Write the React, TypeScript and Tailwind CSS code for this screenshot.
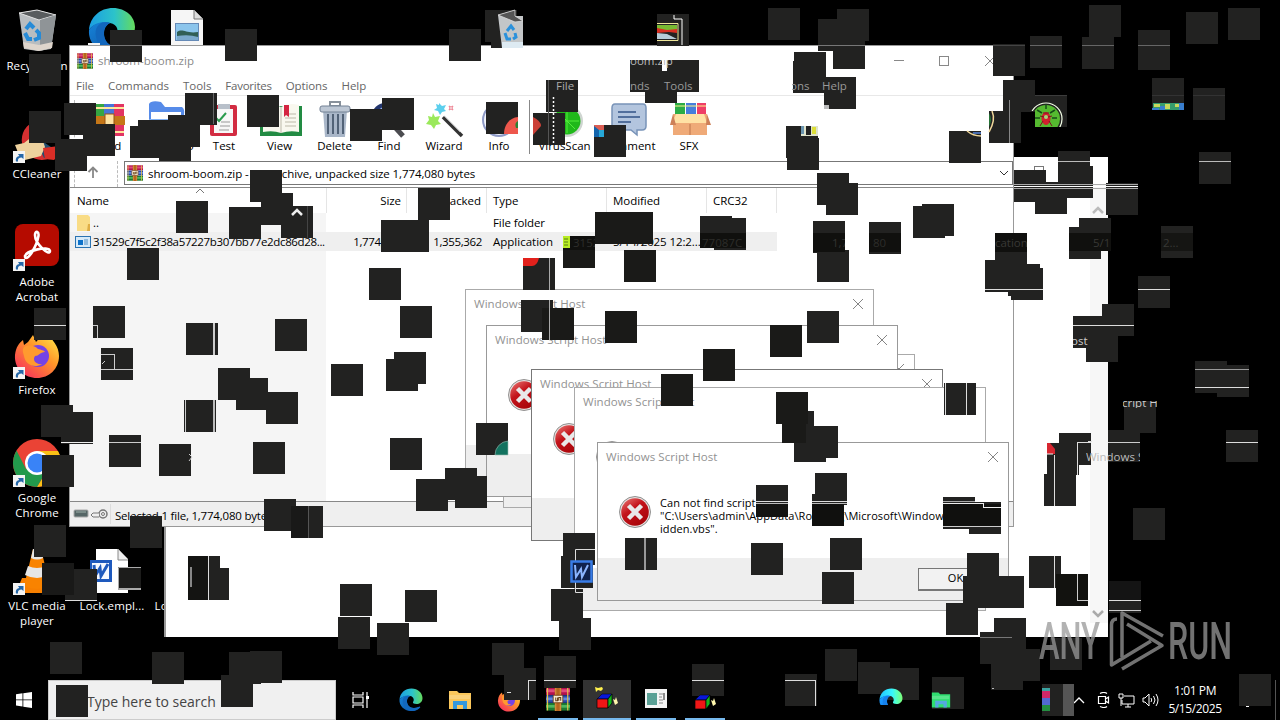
import React from 'react';

type Box = [number, number, number, number, string];

// --- TACHES CARRÉES (32x32) DISPERSÉES SUR L'ÉCRAN ---
const BLOCKS: [number, number][] = [
  [110, 30], [225, 29], [29, 54], [64, 103], [29, 111], [83, 124], [55, 139], [185, 93], [247, 95],
  [130, 126], [138, 120], [168, 115], [159, 129], [250, 170], [449, 29], [485, 10], [491, 16],
  [350, 109], [382, 98], [486, 102], [546, 80], [533, 113], [594, 125], [630, 60], [657, 14],
  [768, 8], [837, 9], [818, 19], [833, 37], [794, 52], [793, 61], [824, 77], [667, 60], [645, 71],
  [786, 126], [787, 138], [949, 131], [817, 173], [826, 183], [993, 44], [1030, 36], [1089, 5],
  [1082, 37], [1138, 30], [1138, 38], [1186, 12], [1228, 8], [1003, 80], [1035, 95], [989, 111],
  [1152, 78], [1193, 88], [1199, 152], [1058, 151], [1014, 170], [1061, 166], [1035, 182],
  [1106, 183], [1079, 218], [1069, 227], [1161, 226], [1138, 276], [995, 238],
  [176, 201], [229, 207], [261, 193], [281, 206], [127, 248], [93, 306], [101, 348], [186, 323],
  [275, 319], [34, 308], [218, 368], [236, 378], [266, 392], [184, 400], [41, 405], [418, 188],
  [381, 220], [397, 220], [369, 268], [400, 306], [394, 352], [386, 359], [331, 364], [523, 258],
  [521, 300], [542, 308], [563, 236], [595, 212], [621, 212], [624, 250], [605, 311], [700, 216],
  [714, 218], [813, 221], [869, 222], [922, 204], [913, 206], [817, 250], [807, 311], [770, 325],
  [703, 349], [661, 374], [776, 392], [944, 383], [985, 260], [1008, 264], [1011, 268], [1102, 304],
  [1073, 316], [1086, 330], [1195, 361], [1217, 365], [1124, 401], [1108, 430], [1226, 430],
  [61, 412], [109, 435], [159, 444], [253, 442], [42, 455], [264, 499], [291, 506], [130, 516],
  [34, 525], [42, 563], [65, 569], [188, 556], [197, 568], [50, 642], [152, 652], [229, 652],
  [250, 651], [221, 675], [56, 685], [390, 438], [476, 423], [445, 468], [416, 479], [455, 476],
  [563, 533], [561, 556], [551, 589], [559, 618], [340, 584], [338, 617], [377, 623], [405, 590],
  [492, 643], [504, 668], [544, 656], [625, 538], [782, 411], [794, 430], [806, 426], [815, 473],
  [756, 485], [812, 494], [943, 497], [969, 502], [751, 543], [830, 538], [822, 572], [967, 553],
  [963, 576], [992, 576], [946, 603], [1029, 556], [1056, 574], [1059, 433], [1047, 443],
  [1044, 474], [1133, 508], [1109, 581], [994, 618], [980, 632], [1008, 649], [991, 658],
  [1050, 638], [825, 649], [858, 662], [887, 668], [932, 677], [692, 664], [785, 674], [1042, 684],
  [1239, 674],
];

// Zones un peu plus sombres à l'intérieur des taches
const SHADES: Box[] = [
  [563, 236, 32, 32, '#1a1a18'], [595, 212, 58, 32, '#1a1a18'], [624, 250, 32, 32, '#1a1a18'],
  [542, 308, 32, 32, '#1a1a18'], [605, 311, 32, 32, '#1a1a18'], [770, 325, 32, 32, '#1a1a18'],
  [703, 349, 32, 32, '#1a1a18'], [661, 374, 32, 32, '#1a1a18'], [776, 392, 32, 32, '#1a1a18'],
  [782, 424, 24, 19, '#1a1a18'],
  [813, 233, 32, 19, '#10100e'], [869, 233, 32, 19, '#10100e'], [700, 233, 46, 15, '#10100e'],
  [563, 236, 32, 14, '#10100e'], [995, 233, 32, 19, '#10100e'], [1069, 233, 42, 18, '#10100e'],
  [1161, 233, 32, 18, '#151513'], [943, 504, 58, 22, '#10100e'], [812, 504, 32, 22, '#10100e'],
  [756, 504, 32, 13, '#141412'], [188, 556, 20, 44, '#141412'], [1056, 574, 32, 32, '#12120f'],
  [42, 563, 32, 32, '#191918'], [291, 506, 17, 32, '#191918'], [1109, 581, 32, 20, '#141414'],
];

// Traits de fenêtres qui restent visibles sur les taches
const LINES: Box[] = [
  [110, 45, 32, 1, '#777777'], [818, 45, 47, 1, '#777777'], [993, 45, 32, 1, '#444444'],
  [1030, 45, 32, 1, '#666666'], [1082, 45, 32, 1, '#666666'], [1138, 45, 32, 1, '#666666'],
  [213, 93, 1, 31, '#666666'], [548, 80, 1, 65, '#555555'], [307, 206, 1, 32, '#444444'],
  [93, 325, 5, 1, '#cccccc'], [97, 325, 1, 13, '#cccccc'], [34, 325, 32, 1, '#dddddd'],
  [101, 354, 14, 1, '#cccccc'], [114, 354, 1, 16, '#cccccc'], [101, 369, 32, 1, '#cccccc'],
  [213, 323, 2, 32, '#cccccc'], [185, 400, 1, 32, '#cccccc'], [213, 400, 2, 32, '#bbbbbb'],
  [61, 442, 32, 1, '#eeeeee'], [109, 442, 32, 1, '#cccccc'], [308, 506, 1, 32, '#555555'],
  [65, 600, 32, 1, '#dddddd'], [208, 556, 1, 44, '#dddddd'], [190, 567, 2, 20, '#888888'],
  [549, 258, 1, 32, '#aaaaaa'], [549, 300, 1, 40, '#aaaaaa'], [644, 538, 2, 32, '#999999'],
  [756, 501, 32, 1, '#dddddd'], [756, 503, 32, 1, '#bbbbbb'], [812, 501, 35, 1, '#dddddd'],
  [812, 503, 35, 1, '#bbbbbb'], [943, 501, 32, 1, '#aaaaaa'], [943, 503, 40, 1, '#eeeeee'],
  [983, 503, 1, 4, '#eeeeee'], [983, 507, 18, 1, '#eeeeee'], [943, 526, 58, 1, '#cccccc'],
  [945, 383, 1, 32, '#dddddd'], [966, 383, 1, 32, '#dddddd'], [985, 289, 58, 1, '#dddddd'],
  [1138, 289, 32, 1, '#dddddd'], [1073, 325, 61, 1, '#dddddd'], [1195, 369, 54, 1, '#999999'],
  [1195, 387, 54, 1, '#dddddd'], [1108, 442, 32, 1, '#cccccc'], [1226, 442, 32, 1, '#dddddd'],
  [1109, 600, 32, 1, '#dddddd'], [1109, 610, 32, 1, '#cccccc'], [1054, 455, 1, 51, '#dddddd'],
  [1054, 556, 1, 32, '#dddddd'], [1077, 442, 1, 33, '#dddddd'], [1077, 442, 14, 1, '#dddddd'],
  [1077, 574, 1, 26, '#cccccc'], [1077, 600, 11, 1, '#cccccc'], [1058, 161, 32, 1, '#bbbbbb'],
  [1199, 161, 32, 1, '#bbbbbb'], [1014, 184, 124, 1, '#aaaaaa'], [1014, 186, 124, 1, '#ffffff'],
  [1014, 188, 124, 1, '#aaaaaa'], [692, 680, 32, 1, '#dddddd'], [785, 680, 31, 1, '#dddddd'],
  [815, 680, 1, 26, '#dddddd'], [528, 680, 8, 1, '#dddddd'], [528, 680, 1, 20, '#dddddd'],
  [544, 680, 32, 1, '#dddddd'], [1009, 100, 1, 43, '#888888'], [1035, 95, 32, 1, '#3c3c3c'],
  [1152, 95, 32, 1, '#333333'], [1193, 95, 32, 1, '#333333'], [980, 637, 32, 1, '#777777'],
  [1063, 684, 11, 32, '#555555'], [662, 60, 5, 11, '#ffffff'], [1246, 706, 3, 1, '#ffffff'],
  [992, 688, 2, 1, '#bbbbbb'], [507, 692, 4, 1, '#dddddd'], [824, 105, 5, 4, '#bbbbbb'],
  [1088, 441, 4, 1, '#dddddd'],
];

// [x, y, largeur, hauteur, décalage x, décalage y, texte, classe]
const GHOST_TEXTS: [number, number, number, number, number, number, string, string][] = [
  [546, 78, 32, 16, 10, 0, 'File', 'text-[#aaa]'],
  [630, 60, 46, 20, 0, -7, 'oom.zip', 'text-[#bbb]'],
  [630, 78, 22, 16, 0, 0, 'nds', 'text-[#999]'],
  [662, 78, 37, 16, 2, 0, 'Tools', 'text-[#999]'],
  [792, 78, 20, 16, -2, 0, 'ons', 'text-[#999]'],
  [820, 78, 34, 16, 2, 0, 'Help', 'text-[#999]'],
  [571, 235, 24, 16, 2, 0, '3152', 'text-[#2d2d2a]'],
  [700, 235, 46, 16, 2, 0, '77087C', 'text-[#2d2d2a]'],
  [830, 235, 15, 16, 2, 0, '1,7', 'text-[#333330]'],
  [869, 235, 32, 16, 4, 0, '80', 'text-[#2d2d2a]'],
  [995, 235, 32, 16, -3, 0, 'ication', 'text-[#383835]'],
  [1085, 235, 26, 16, 8, 0, '5/1', 'text-[#383835]'],
  [1161, 235, 32, 16, 2, 0, '2...', 'text-[#383835]'],
  [1073, 333, 16, 16, -2, 0, 'ost', 'text-[#ccc]'],
  [1123, 401, 34, 7, -1, -6, 'cript Host', 'text-[#ccc]'],
  [1086, 449, 54, 16, 0, 0, 'Windows Script', 'text-[#bbb]'],
];

const RarIcon = ({ className }: { className: string }) => (
  <svg viewBox="0 0 16 16" className={`shrink-0 ${className}`}>
    <rect width="16" height="5" y="0.3" fill="#b3124f" />
    <rect width="16" height="2" y="1.5" fill="#e04a7d" />
    <rect width="16" height="5" y="5.5" fill="#274aa8" />
    <rect width="16" height="1.8" y="7" fill="#5f86df" />
    <rect width="16" height="5" y="10.7" fill="#1c7a32" />
    <rect width="16" height="1.8" y="12" fill="#4cb85e" />
    <path d="M1 .3v15.4M14.5 .3v15.4" stroke="#e3c04b" strokeWidth=".8" />
    <rect x="5.8" width="4.4" height="16" fill="#b5651f" />
    <path d="M6.500 0v16M9.500 0v16" stroke="#e8a94c" strokeWidth=".5" />
    <rect x="4.8" y="5.500" width="6.400" height="5" rx=".8" fill="#f4ead2" stroke="#774014" strokeWidth=".6" />
    <path d="M6.500 7v2.200h1.200V7M8.500 9.200V7h1.300v2.200" fill="none" stroke="#674016" strokeWidth=".7" />
  </svg>
);

const EdgeIcon = ({ className }: { className: string }) => (
  <svg viewBox="0 0 48 48" className={className}>
    <defs>
      <linearGradient id="edgeTop" x1="0" x2="1"><stop stopColor="#1b9de2" /><stop offset=".55" stopColor="#2cc3ca" /><stop offset="1" stopColor="#65db5d" /></linearGradient>
      <linearGradient id="edgeLow" x1="0" x2="1" y2="1"><stop stopColor="#1683d8" /><stop offset="1" stopColor="#0c4fa0" /></linearGradient>
    </defs>
    <path d="M1 23C2 10 12 1 25 1c13 0 22 9 22 19 0 8-6 12-12 12-5 0-8-2-7-4 3-3 2-11-6-12C12 15 4 18 1 23Z" fill="url(#edgeTop)" />
    <path d="M1 23c5-8 16-9 21-7-6 3-7 10-5 16 3 8 13 10 22 6 3-1 4 0 3 1-5 6-12 8-19 7C10 45 0 36 1 23Z" fill="url(#edgeLow)" />
    <path d="M17 32c-3-8 0-14 5-16-10-3-16 4-14 14 2 9 9 15 17 16 6 0 13-3 17-7 1-1 0-2-3-1-9 4-19 2-22-6Z" fill="#1267bd" />
  </svg>
);

const FirefoxIcon = ({ className }: { className: string }) => (
  <svg viewBox="0 0 48 48" className={className}>
    <defs>
      <linearGradient id="fox" x1="1" x2=".15" y2="1"><stop stopColor="#fff04b" /><stop offset=".45" stopColor="#ff9629" /><stop offset="1" stopColor="#f72b5f" /></linearGradient>
    </defs>
    <path d="M2 24C3 16 6 12 10 9l1 5 4-3 5-7 3 7c3-4 7-5 8-8 9 4 15 13 15 22 0 13-10 22-22 22S1 38 2 24Z" fill="url(#fox)" />
    <circle cx="25" cy="25" r="11" fill="#7543e5" />
    <path d="M11 16c6-3 11-1 14 2 3 1 6 1 7 3-5 0-6 4-10 4-3 4 1 9 7 8-8 5-17 0-18-8-1-4-2-6 0-9Z" fill="#ff9a2f" />
  </svg>
);

const ShortcutArrow = () => (
  <svg viewBox="0 0 12 12" className="absolute bottom-0 left-0 size-3">
    <rect width="12" height="12" fill="#f4f4f4" />
    <path d="M3 10.500C2.300 7 4 5.300 6.300 5L5 3h5.500v5L8.600 6.500C6 6.500 4.500 8 5 10.500Z" fill="#2467a8" />
  </svg>
);

const BinIcon = () => (
  <svg viewBox="0 0 48 48" className="size-12">
    <path d="M6 6 24 3l19 5-5 34-13 2-14-2Z" fill="#b9bdc0" />
    <path d="M6 6 24 3l19 5-17 5Z" fill="#595c5e" stroke="#e3e3e3" />
    <path d="M27 13 43 8l-5 33-11 3Z" fill="#8f9497" />
    <path d="m10 35 16 3 14-3-1 6-13 3-15-3Z" fill="#ded5cc" />
    <path d="m13 22 4-5 4 4M12 26l3 6h4M21 33l5-2v-5l-3-3" fill="none" stroke="#278bd7" strokeWidth="4" />
  </svg>
);

const PictureFile = () => (
  <svg viewBox="0 0 48 48" className="size-12">
    <path d="M8 3h23l9 9v34H8Z" fill="#f6f6f6" />
    <path d="M31 3v9h9" fill="#ddd" stroke="#777" />
    <rect x="12.500" y="16.500" width="23" height="17" fill="#8cc5ec" stroke="#658ab7" />
    <path d="M14 25c6-4 9 2 21 0v8H14Z" fill="#315f55" />
    <path d="M14 29q12-2 21 1v3H14Z" fill="#7ba9cc" />
  </svg>
);

const WordFile = () => (
  <svg viewBox="0 0 48 48" className="size-12">
    <path d="M8 2h22l10 10v34H8Z" fill="#fff" />
    <path d="M30 2v11h10" fill="#eee" stroke="#888" />
    <rect x="2" y="13" width="22" height="22" fill="#1e59bd" />
    <rect x="4" y="16" width="17" height="16" fill="#f5f8ff" />
    <path d="m6 18 1 11 5-8 1 8 7-12" fill="none" stroke="#1e59bd" strokeWidth="3" />
  </svg>
);

const CCleanerIcon = () => (
  <svg viewBox="0 0 48 48" className="size-12">
    <path d="M42 10A20 20 0 1 0 43 39L34 32A10 10 0 1 1 34 17Z" fill="#d63031" />
    <path d="m20 20 18 12 5 8-12 3Z" fill="#244f71" />
    <path d="m2 30 9-2 9-7 10 5 2 6-4 9-16 4-6-5Z" fill="#eed29e" />
    <path d="m30 33 16-2q2 9-5 14l-9-1Z" fill="#d92e27" />
  </svg>
);

const AcrobatIcon = () => (
  <svg viewBox="0 0 48 48" className="size-12">
    <rect x="2" y="1" width="44" height="42" rx="8" fill="#b50b00" />
    <path d="M12 33c1-5 24-11 25-5 0 6-15-7-15-16 0-5 5-4 3 3-1 6-8 20-12 20-1 0-1-1-1-2Z" fill="none" stroke="#fff" strokeWidth="2.600" />
  </svg>
);

const ChromeIcon = () => (
  <svg viewBox="0 0 48 48" className="size-12">
    <circle cx="24" cy="24" r="24" fill="#ea4335" />
    <path d="M24 12h21A24 24 0 0 1 24 48l11-18Z" fill="#fbc116" />
    <path d="M3.500 11.500A24 24 0 0 0 24 48l10.500-18L13 30Z" fill="#229a4c" />
    <circle cx="24" cy="24" r="12" fill="#fff" /><circle cx="24" cy="24" r="9.500" fill="#3983f7" />
  </svg>
);

const VlcIcon = () => (
  <svg viewBox="0 0 48 48" className="size-12">
    <path d="m9 31-6 15h42l-6-15Z" fill="#f77f00" />
    <path d="m20 2-9 37q13 6 26 0L28 2Z" fill="#f98300" />
    <path d="m20 2-2 9q6 3 12 0l-2-9ZM15 19l-3 9q12 6 24 0l-3-9q-9 4-18 0Z" fill="#e6e6e6" />
  </svg>
);

const ErrorIcon = () => (
  <svg viewBox="0 0 32 32" className="size-8 shrink-0">
    <defs>
      <linearGradient id="err" x1="0" y1="0" x2=".7" y2="1"><stop stopColor="#ed7d79" /><stop offset=".45" stopColor="#c3141b" /><stop offset="1" stopColor="#a80409" /></linearGradient>
    </defs>
    <circle cx="16" cy="16" r="15.500" fill="#e7e1df" stroke="#777" strokeWidth=".8" />
    <circle cx="16" cy="16" r="13.800" fill="url(#err)" />
    <path d="m9.500 9.500 13 13M22.500 9.500l-13 13" stroke="#e9e9e9" strokeWidth="4.500" />
  </svg>
);

const Cross = ({ className }: { className: string }) => (
  <svg viewBox="0 0 10 10" className={className}><path d="m0 0 10 10M10 0 0 10" stroke="#858585" strokeWidth="1" /></svg>
);

// Icônes de la barre d'outils
const toolIcon: Record<string, React.ReactNode> = {
  Add: <g><path d="M1 2h10v32H1z" fill="#36a643" /><path d="M11 2h10v32H11z" fill="#4775d8" /><path d="M21 2h10v32H21z" fill="#e23463" /><path d="M1 6h30M1 30h30" stroke="#ffe69c" strokeWidth="2" /><path d="M0 14h32v9H0z" fill="#c57718" /><rect x="12" y="12" width="9" height="12" fill="#ffe4a2" stroke="#965313" /></g>,
  'Extract To': <g><path d="M0 2q2-4 12-2l4 5h17q3 2 2 8v20H0Z" fill="#568be9" /><path d="M2 10h30v20H2z" fill="#fff" /><path d="M0 17h36v16H0z" fill="#7faff0" /></g>,
  Test: <g><rect x="4" y="3" width="27" height="31" rx="2" fill="#d22c42" /><path d="M8 7h19v24H8z" fill="#f7f7f7" /><path d="M12 2h12v5H12z" fill="#b8c0ca" /><path d="m9 15 4 4 7-8" stroke="#2a9b4d" strokeWidth="2" fill="none" /><path d="M15 20h9M14 24h10M13 28h10" stroke="#999" /></g>,
  View: <g><path d="M-2 4h42v30H-2z" fill="#228b43" /><path d="M1 3q9-3 18 2 8-5 18-2v27q-9-2-18 1-8-3-18-1Z" fill="#f9f8ef" /><path d="M19 5v26M23 12h11M23 16h11M23 20h11M23 24h11" stroke="#bcb9a9" /><path d="M22 3h5v12l-3-2-2 2Z" fill="#d42542" /></g>,
  Delete: <g><path d="M13 0h10v4H13z" fill="none" stroke="#88919b" strokeWidth="2" /><path d="M6 8h24l-2 27H8Z" fill="#a9b6c8" /><rect x="3" y="4" width="30" height="6" rx="2" fill="#bdc7d4" stroke="#738194" /><path d="M11 12v20M16 12v20M21 12v20M26 12v20" stroke="#526277" strokeWidth="2" /></g>,
  Find: <g><circle cx="14" cy="14" r="11" fill="#9ab6ef" stroke="#23366e" strokeWidth="4" /><path d="m22 23 10 11" stroke="#4b4c50" strokeWidth="5" /></g>,
  Wizard: <g><path d="m7 11 2 4 5-1-2 5 3 3-5 1-2 4-3-4-5-1 3-4-1-4 4 1Z" fill="#9be95b" /><path d="m13 1 3 3 4-1-2 4 2 2-4 1-2 3-2-4-4-1 3-2-1-4 3 1Z" fill="#5ccfed" /><path d="m23 4 2 1 2-1-1 2 1 2-2-1-2 1 1-2Z" fill="none" stroke="#ed8291" /><path d="m17 15 19 19" stroke="#333" strokeWidth="3.500" /><path d="m18 14 16 16" stroke="#aaa" strokeWidth="1" /></g>,
  Info: <g><circle cx="18" cy="18" r="16" fill="#f2f4fb" stroke="#8e9ac6" strokeWidth="2" /><circle cx="18" cy="18" r="13" fill="#3b63ce" /></g>,
  VirusScan: <g><circle cx="20" cy="19" r="16" fill="#cfd5d1" /><circle cx="20" cy="19" r="13.500" fill="#20b81b" /><path d="M20 7v24M8 19h24M12 11l16 16" stroke="#52ed3a" /><path d="M19 1h8v8h-8z" fill="#58b64a" /></g>,
  Comment: <g><path d="M4 2h28q3 0 3 4v18q0 4-4 4h-5v5l-6-5H5q-4 0-4-4V6q0-4 3-4Z" fill="#b3c5de" stroke="#7893b8" strokeWidth="1.500" /><path d="M7 10h18M7 15h22M7 20h13" stroke="#526f9c" strokeWidth="1.800" /></g>,
  SFX: <g><path d="M4 1h10v12H4z" fill="#2cac46" /><path d="M15 1h10v12H15z" fill="#477edb" /><path d="M26 1h9v12h-9z" fill="#ef3e67" /><path d="M4 4h31" stroke="#fff58a" /><path d="M2 12h34v21H2z" fill="#efaa78" /><path d="M5 12h28l3 9H1Z" fill="#ffe1a5" /><path d="m2 12-3 11h6M36 12l4 11h-5" fill="#cd8058" /><path d="M19 22v11" stroke="#bd744b" /></g>,
};

const Tool = ({ name, className }: { name: string; className: string }) => (
  <div className={`flex flex-col items-center pt-[6px] ${className}`}>
    <svg viewBox="0 0 36 36" className="h-9 w-9 overflow-visible">{toolIcon[name]}</svg>
    <span className="leading-4 whitespace-nowrap">{name}</span>
  </div>
);

const DesktopItem = ({ label, children, shortcut }: { label: string; children?: React.ReactNode; shortcut?: boolean }) => (
  <div className="flex h-[108px] w-[74px] flex-col items-center">
    <div className="relative h-12 w-12">{children}{shortcut && <ShortcutArrow />}</div>
    <div className="mt-[3px] text-center leading-[15px] text-white tracking-[0.1px] whitespace-pre">{label}</div>
  </div>
);

const ScriptDialog = ({ place, children }: { place: string; children?: React.ReactNode }) => (
  <div className={`absolute flex flex-col border bg-white ${place}`}>
    <div className="flex h-[28px] shrink-0 items-center justify-between pr-[10px] pl-2 text-[#929292]">
      <span className="tracking-[0.050px]">Windows Script Host</span>
      <Cross className="size-[10px]" />
    </div>
    <div className="flex flex-1 pt-[25px] pl-[21px]">
      <ErrorIcon />
      <div className="pl-[9px] text-[11px] leading-[13px] tracking-[0.080px] whitespace-pre text-black">{children}</div>
    </div>
    <div className="flex h-[42px] shrink-0 items-center justify-end bg-[#eee] pr-[14px]">
      {children && (
        <div className="flex h-[23px] w-[76px] items-center justify-center border-t border-r-2 border-b-2 border-l border-[#777] bg-[#f2f2f2] text-[11px] text-black">OK</div>
      )}
    </div>
  </div>
);

const ArchiveWindow = () => (
  <div className="absolute top-[45px] left-[69px] flex h-[482px] w-[945px] flex-col border border-[#999] bg-white">
    {/* Titre */}
    <div className="flex h-[29px] shrink-0 items-center pl-[7px] text-[#8a8a8a]">
      <RarIcon className="size-4" />
      <span className="ml-[5px] flex-1 tracking-[0.050px]">shroom-boom.zip</span>
      <div className="h-px w-[10px] bg-[#888]" />
      <div className="ml-[35px] size-[10px] border border-[#888]" />
      <Cross className="mr-[18px] ml-[36px] size-[10px]" />
    </div>
    {/* Menus */}
    <div className="flex h-[21px] shrink-0 items-center gap-[14px] border-b border-[#e8e8e8] pt-px pl-[6px] tracking-[-0.050px] text-[#666]">
      <span>File</span><span>Commands</span><span>Tools</span><span className="tracking-[-0.250px]">Favorites</span><span className="tracking-[-0.100px]">Options</span><span>Help</span>
    </div>
    {/* Outils */}
    <div className="flex h-[65px] shrink-0 pl-[4px]">
      <div className="my-1 w-[9px] border-l border-dashed border-[#bbb]" />
      <Tool name="Add" className="w-[55px]" />
      <Tool name="Extract To" className="w-[58px]" />
      <Tool name="Test" className="w-[56px]" />
      <Tool name="View" className="w-[55px]" />
      <Tool name="Delete" className="w-[55px]" />
      <Tool name="Find" className="w-[54px]" />
      <Tool name="Wizard" className="w-[56px]" />
      <Tool name="Info" className="w-[54px]" />
      <div className="mt-1 ml-[3px] h-[54px] w-[3px] border-l border-[#888]" />
      <Tool name="VirusScan" className="w-[65px]" />
      <Tool name="Comment" className="w-16" />
      <Tool name="SFX" className="w-14" />
    </div>
    {/* Chemin */}
    <div className="flex h-[27px] shrink-0 border-b border-[#888]">
      <div className="ml-[4px] flex w-[44px] justify-center border-x border-dashed border-[#bbb] pt-[5px]">
        <svg viewBox="0 0 12 12" className="mr-[7px] size-3"><path d="M6 12V2M1.500 6 6 1.500 10.500 6" fill="none" stroke="#888" strokeWidth="1.800" /></svg>
      </div>
      <div className="ml-[6px] flex h-[24px] flex-1 items-center border border-[#777] pl-[2px]">
        <RarIcon className="size-4" />
        <span className="ml-[5px] flex-1 pt-px tracking-[-0.080px]">shroom-boom.zip - ZIP archive, unpacked size 1,774,080 bytes</span>
        <svg viewBox="0 0 10 6" className="mr-[3px] h-[6px] w-[10px]"><path d="m1 1 4 4 4-4" fill="none" stroke="#333" /></svg>
      </div>
    </div>
    {/* Colonnes */}
    <div className="flex h-[25px] shrink-0 items-center tracking-[-0.050px] [&>div]:h-full [&>div]:border-r [&>div]:border-[#e5e5e5] [&>div]:leading-[26px]">
      <div className="relative w-[257px] pl-[7px]">Name
        <svg viewBox="0 0 8 5" className="absolute top-[1px] left-[126px] h-[5px] w-2"><path d="m0 4 4-4 4 4" fill="none" stroke="#777" /></svg>
      </div>
      <div className="w-[80px] pr-[5px] text-right">Size</div>
      <div className="w-[80px] pr-[5px] text-right">Packed</div>
      <div className="w-[120px] pl-[6px]">Type</div>
      <div className="w-[100px] pl-[6px]">Modified</div>
      <div className="w-[70px] pl-[6px]">CRC32</div>
    </div>
    <div className="relative flex-1 bg-[linear-gradient(to_right,#f5f5f5_256px,#fff_256px)]">
      <div className="flex h-[19px] items-center">
        <div className="flex w-[416px] items-center pl-[7px]">
          <svg viewBox="0 0 13 16" className="h-4 w-[13px] shrink-0"><path d="M0 0h11l2 2v14H0z" fill="#f9dc86" /><path d="M11 9h2v7h-3z" fill="#dfae45" /></svg>
          <span className="ml-[3px]">..</span>
        </div>
        <span className="pl-[7px] tracking-[-0.100px]">File folder</span>
      </div>
      <div className="flex h-[19px] w-[707px] items-center bg-[#efefef] whitespace-nowrap">
        <div className="flex w-[257px] items-center pl-[5px]">
          <svg viewBox="0 0 16 12" className="h-3 w-4 shrink-0"><rect x=".5" y=".5" width="15" height="11" fill="#d7eaf8" stroke="#2a73b1" /><path d="M3 4h5v5H3z" fill="#0f72c9" /><path d="M9 4h4M9 6h4M9 8h4" stroke="#4b8cc4" /></svg>
          <span className="ml-[2px] tracking-[-0.350px]">31529c7f5c2f38a57227b307bb77e2dc86d28...</span>
        </div>
        <div className="w-[80px] pr-[5px] text-right tracking-[-0.350px]">1,774,080</div>
        <div className="w-[80px] pr-[5px] text-right tracking-[-0.350px]">1,355,362</div>
        <div className="w-[120px] pl-[6px]">Application</div>
        <div className="w-[100px] pl-[6px] tracking-[-0.100px]">5/14/2025 12:2...</div>
      </div>
    </div>
    {/* Statut */}
    <div className="flex h-[25px] shrink-0 items-center border-t border-[#888] bg-[#efefef] pl-[3px]">
      <svg viewBox="0 0 36 12" className="h-3 w-9"><rect x="1" y="2" width="14" height="7" rx="1" fill="#566" stroke="#aaa" /><path d="M3 4h10" stroke="#9fb0aa" /><circle cx="30" cy="6" r="4" fill="#eee" stroke="#777" strokeWidth="1.500" /><circle cx="30" cy="6" r="1.500" fill="none" stroke="#777" /><path d="M26 5h-6l-2 2 2 2h6" fill="#eee" stroke="#777" /></svg>
      <div className="mr-[4px] ml-[1px] h-[20px] w-px bg-[#ddd]" />
      <span className="pt-[3px] tracking-[-0.200px]">Selected 1 file, 1,774,080 bytes</span>
    </div>
  </div>
);

const BackWindow = () => (
  <div className="absolute top-[157px] left-[164px] flex h-[480px] w-[944px] justify-end border-l-2 border-[#999] bg-white">
    <div className="mt-[9px] mr-[46px] size-[10px] border border-[#777]" />
    <div className="mt-[28px] mb-[14px] flex w-[18px] flex-col items-center justify-between bg-[#f7f7f7] pt-[21px] pb-[5px]">
      <svg viewBox="0 0 12 8" className="mr-[3px] h-2 w-3"><path d="m1 7 5-5 5 5" fill="none" stroke="#bbb" strokeWidth="2.500" /></svg>
      <svg viewBox="0 0 12 8" className="mr-[3px] h-2 w-3"><path d="m1 1 5 5 5-5" fill="none" stroke="#aaa" strokeWidth="2.500" /></svg>
    </div>
  </div>
);

const CubesIcon = ({ star }: { star?: boolean }) => (
  <svg viewBox="0 0 24 24" className="size-6">
    <path d="m2 12 5-5h10l-4 5Z" fill="#0918d9" stroke="#000" strokeWidth=".5" />
    <path d="M2 12h11v9H2z" fill="#ef1616" stroke="#000" strokeWidth=".7" />
    <path d="m13 12 4-5v9l-4 5Z" fill="#14b51d" stroke="#000" strokeWidth=".7" />
    <path d="m18 12 2 1 1-3 1 3 1 3-3 2-1-3Z" fill="#fff7ad" />
    {star && <path d="m0 0 3 1 4-1 1 2-2 2-3-1-2 2Z" fill="#fff14d" />}
  </svg>
);

const FolderIcon = ({ className, tone, base }: { className: string; tone: string; base: string }) => (
  <svg viewBox="0 0 24 24" className={className}>
    <path d="M1 3h8l2 2h12v16H1z" fill={tone} /><path d="M1 7h21v4H1z" fill="#fff" opacity=".2" />
    <path d="M5 21v-8h14v8h-4v-4H9v4Z" fill={base} />
  </svg>
);

const Taskbar = () => (
  <div className="absolute bottom-0 left-0 flex h-10 w-full items-stretch bg-black">
    <div className="flex w-12 items-center justify-center">
      <svg viewBox="0 0 16 16" className="size-4"><path d="M0 2.200 6.500 1.300v6.200H0ZM7.300 1.200 16 0v7.500H7.300ZM0 8.300h6.500v6.200L0 13.600ZM7.300 8.300H16V16l-8.700-1.200Z" fill="#fff" /></svg>
    </div>
    <div className="flex w-[288px] items-center border border-[#ccc] bg-[#f0f0f0] pt-[2px] pl-[38px] text-[14px] text-[#444]">Type here to search</div>
    <div className="flex w-[48px] items-center justify-center">
      <svg viewBox="0 0 17 16" className="h-4 w-[17px]"><path d="M1 0v3h10V0M1 16v-3h10v3M1 5h10v6H1zM15 0v4M15 7v9" fill="none" stroke="#fff" strokeWidth="1.200" /><rect x="14" y="4" width="3" height="3" fill="#fff" /></svg>
    </div>
    <div className="flex w-[54px] items-center justify-center"><EdgeIcon className="size-6" /></div>
    <div className="flex w-[43px] items-center justify-center"><FolderIcon className="size-6" tone="#fbc75b" base="#3598dc" /></div>
    <div className="flex w-[55px] items-center justify-center"><FirefoxIcon className="size-6" /></div>
    <div className="ml-[2px] flex w-[40px] items-center justify-center border-b-2 border-[#76b9ed]"><RarIcon className="size-6" /></div>
    <div className="ml-[5px] flex w-[48px] items-center justify-center border-b-2 border-[#76b9ed] bg-[#333]"><CubesIcon star /></div>
    <div className="ml-[5px] flex w-[40px] items-center justify-center border-b-2 border-[#76b9ed]">
      <svg viewBox="0 0 22 20" className="h-5 w-[22px]"><rect width="22" height="19" fill="#f4f4f4" /><path d="M2 4h10v12H2z" fill="#5aa095" /><path d="M14 5h4M14 8h3M14 11h4M14 14h4" stroke="#888" /><path d="M19 4v7" stroke="#222" /></svg>
    </div>
    <div className="ml-[9px] flex w-[40px] items-center justify-center border-b-2 border-[#76b9ed]" />
    <div className="ml-auto flex items-center text-white">
      <svg viewBox="0 0 12 7" className="h-[7px] w-3"><path d="m1 6 5-5 5 5" fill="none" stroke="#fff" strokeWidth="1.300" /></svg>
      <svg viewBox="0 0 14 16" className="ml-[11px] h-4 w-[14px]"><path d="M4 1.500q4-2 7 0M4 14.500q4 2 7 0M2.500 4.500h7v7h-7zM9.500 7l3-2v6l-3-2" fill="none" stroke="#fff" strokeWidth="1.200" /></svg>
      <svg viewBox="0 0 17 15" className="ml-[8px] h-[15px] w-[17px]"><path d="M6 3h10v8H4V7M7 14h6M10 11v3M1 1h4v4H1zM3 5v8" fill="none" stroke="#fff" /></svg>
      <svg viewBox="0 0 17 14" className="ml-[7px] h-[14px] w-[17px]"><path d="M1 5h2l4-4v12L3 9H1zM9 5q1.500 2 0 4M11.500 3q3 4 0 8M14 1q4 6 0 12" fill="none" stroke="#fff" /></svg>
      <div className="ml-[7px] w-[58px] text-center text-[12px] leading-[18px] tracking-[-0.400px] whitespace-nowrap">1:01 PM<br />5/15/2025</div>
      <div className="mr-[4px] ml-[51px] h-10 w-px bg-[#555]" />
    </div>
  </div>
);

// Morceaux d'icônes posés par-dessus les taches
const Fragments = () => (
  <svg viewBox="0 0 1280 720" className="absolute inset-0 h-[720px] w-[1280px]">
    <defs>
      <clipPath id="bugClip"><path d="M1035 95h32v32h-32zM1031 95h4v16h-4z" /></clipPath>
    </defs>
    <path d="m498 15 17-5v6h8v32h-21Z" fill="#c3c6c8" />
    <path d="m498 15 17-5v6l8 5-8 1Z" fill="#555" stroke="#ddd" strokeWidth=".8" />
    <path d="m507 31 4-5 3 4M505 33l2 6h4M513 39l3-2-1-4" stroke="#2b91db" strokeWidth="3" fill="none" />
    <path d="M502 42h21v6h-21z" fill="#ddeaf2" />
    <path d="M674 15v4h8v26" fill="none" stroke="#fff" /><path d="M657 23.500h21v17h-21" fill="#222" stroke="#efe79a" />
    <path d="M657 25h20v5h-20z" fill="#78ba32" /><path d="m657 28 10 2 10-1v4l-8-1-12 1Z" fill="#d92e22" /><path d="m657 33 10 1 10 5h-20Z" fill="#b6cbd8" />
    <path d="M553.500 97v46" stroke="#fff" strokeWidth="1.500" strokeDasharray="2 2" />
    <path d="M504 134c0-9 5-16 14-17v17Z" fill="#ee574c" /><path d="M518 121q-4 2-2 7h2Z" fill="#2c8235" /><path d="M533 117q8 4 8 9l-8 9Z" fill="#cb4037" />
    <path d="M594 125h10v5h-10z" fill="#db5e54" /><path d="M594 130h10v7h-10z" fill="#27a8d8" /><path d="M594 126l5 4v7h-5Z" fill="#1365ad" />
    <path d="M801 126h17v10h-17z" fill="#dfe3cc" /><path d="M806 126h5v9h-5z" fill="#222" /><path d="M812 127h4v7h-4z" fill="#dddf39" /><path d="M801 126h3v8h-3z" fill="#6b95af" />
    <path d="M967 131q6 5 14 5" fill="none" stroke="#f0d79a" strokeWidth="1.500" />
    <path d="M973 132h8v2h-8z" fill="#496daf" /><path d="M989 113q4 6 0 14Z" fill="#267336" />
    <path d="M992 111q4 9-3 21" fill="none" stroke="#f0d79a" strokeWidth="1.500" />
    <g clipPath="url(#bugClip)">
      <circle cx="1046" cy="119" r="14" fill="#55ba30" /><circle cx="1046" cy="119" r="16" fill="none" stroke="#f3ffe6" strokeWidth="1.200" />
      <path d="M1037 110l5 3M1055 110l-5 3M1035 118h5M1057 118h-5M1046 104v5" stroke="#164d17" strokeWidth="1.500" />
      <ellipse cx="1046" cy="118.500" rx="4.500" ry="6.500" fill="#d1212e" /><path d="M1043 113h6M1040 126l3-5M1052 126l-3-5M1040 116l4 1M1052 116l-4 1" stroke="#7b1620" /><circle cx="1046" cy="117" r="2" fill="#a5d777" />
    </g>
    <path d="M1153 103h31v7h-31z" fill="#359d6c" /><path d="M1154 104h6v3h-6M1165 104h5v5h-5M1175 104h4v3h-4" fill="#c8d85c" /><path d="M1160 106h5v4h-5M1179 103h5v7h-5M1152 108h7v2h-7" fill="#397ece" />
    <path d="m292 215 5-5 5 5" fill="none" stroke="#eee" strokeWidth="2.500" />
    <path d="M523 258h16q-2 8-7 8h-9Z" fill="#e2211c" /><path d="M563 236h7v12h-7z" fill="#b9ed24" /><path d="M564 239h4M564 242h4M564 245h4" stroke="#567d13" />
    <path d="M495 455a14 14 0 0 1 13-14v14Z" fill="#13725f" stroke="#9cbcb4" strokeWidth=".6" />
    <path d="m189 454 3 3-3 4M102 364l3-3" stroke="#ccc" fill="none" />
    <path d="M118 567h23v23h-23z" fill="#1c1c1b" /><path d="M141 567.500h-22.500V590" fill="none" stroke="#aaa" /><path d="M119 589h22" stroke="#aaa" strokeWidth="2" />
    <path d="M595 549.500h-19.500v43h8" fill="none" stroke="#ddd" /><rect x="571.500" y="561.500" width="20" height="20" fill="#10224d" stroke="#397ce6" strokeWidth="2.500" />
    <path d="m575 565 1 12 5-8 1 8 6-12" fill="none" stroke="#8cb6ff" strokeWidth="2" />
    <path d="M1047 443h3l5 6v5h-8Z" fill="#d72630" /><path d="M1047 454h6" stroke="#eee" />
    <path d="M1042 688h8v5h-8z" fill="#3aa2a0" /><path d="M1042 691h8v7h-8z" fill="#d02868" /><path d="M1042 698h8v7h-8z" fill="#526ad1" /><path d="M1042 705h8v6h-8z" fill="#248f41" />
  </svg>
);

const Watermark = () => (
  <div className="absolute top-[608px] left-[1036px] opacity-75">
    <svg viewBox="0 0 200 66" className="h-[66px] w-[200px]" fill="none">
      <text x="3" y="51" fontFamily="Roboto, sans-serif" fontSize="51" fontWeight="500" textLength="61" lengthAdjust="spacingAndGlyphs" fill="#999">ANY</text>
      <g stroke="#999" strokeWidth="3.500" strokeLinejoin="round">
        <path d="M81 11Q75.500 11 75.500 17V57L115 33" />
        <path d="M86 49V5L127 28" />
        <path d="M91 16L126 37.500L86 61" />
      </g>
      <text x="132" y="51" fontFamily="Roboto, sans-serif" fontSize="51" fontWeight="500" textLength="64" lengthAdjust="spacingAndGlyphs" fill="#999">RUN</text>
    </svg>
  </div>
);

export default function App() {
  return (
    <div className="relative h-[720px] w-[1280px] overflow-hidden bg-black font-['Open_Sans','Noto_Sans',sans-serif] text-[11.500px] text-black">
      {/* --- BUREAU --- */}
      <div className="flex gap-px pt-[7px]">
        <div>
          <DesktopItem label="Recycle Bin"><BinIcon /></DesktopItem>
          <DesktopItem label="CCleaner" shortcut><CCleanerIcon /></DesktopItem>
          <DesktopItem label={'Adobe\nAcrobat'} shortcut><AcrobatIcon /></DesktopItem>
          <DesktopItem label="Firefox" shortcut><FirefoxIcon className="size-12" /></DesktopItem>
          <DesktopItem label={'Google\nChrome'} shortcut><ChromeIcon /></DesktopItem>
          <DesktopItem label={'VLC media\nplayer'} shortcut><VlcIcon /></DesktopItem>
        </div>
        <div className="flex flex-col justify-between">
          <DesktopItem label="" shortcut><EdgeIcon className="size-12" /></DesktopItem>
          <DesktopItem label="Lock.empl..."><WordFile /></DesktopItem>
        </div>
        <div className="flex flex-col justify-between">
          <DesktopItem label=""><PictureFile /></DesktopItem>
          <DesktopItem label="Lock.empl..." />
        </div>
      </div>

      {/* --- FENÊTRES --- */}
      <BackWindow />
      <ArchiveWindow />
      <ScriptDialog place="top-[289px] left-[465px] h-[199px] w-[409px] border-[#aaa]" />
      <ScriptDialog place="top-[354px] left-[503px] h-[154px] w-[412px] border-[#aaa]" />
      <ScriptDialog place="top-[325px] left-[486px] h-[172px] w-[412px] border-[#999]" />
      <ScriptDialog place="top-[369px] left-[531px] h-[172px] w-[412px] border-[#777]" />
      <ScriptDialog place="top-[387px] left-[574px] h-[224px] w-[412px] border-[#aaa]" />
      <ScriptDialog place="top-[442px] left-[597px] h-[159px] w-[412px] border-[#999]">
        {'Can not find script file\n"C:\\Users\\admin\\AppData\\Roaming\\Microsoft\\Windows\\h\nidden.vbs".'}
      </ScriptDialog>
      <Taskbar />

      {/* --- TACHES --- */}
      {BLOCKS.map(([x, y], i) => (
        <div key={i} className="absolute size-8 bg-[#222221]" style={{ left: x, top: y }} />
      ))}
      {[...SHADES, ...LINES].map(([x, y, w, h, c], i) => (
        <div key={i} className="absolute" style={{ left: x, top: y, width: w, height: h, background: c }} />
      ))}
      {GHOST_TEXTS.map(([x, y, w, h, dx, dy, text, tone], i) => (
        <div key={i} className="absolute overflow-hidden" style={{ left: x, top: y, width: w, height: h }}>
          <div className={`leading-4 whitespace-nowrap ${tone}`} style={{ marginLeft: dx, marginTop: dy }}>{text}</div>
        </div>
      ))}
      <Fragments />
      <div className="absolute top-[688px] left-[693px]"><CubesIcon /></div>
      <div className="absolute top-[688px] left-[879px] h-[17px] w-6 overflow-hidden brightness-125"><EdgeIcon className="size-6" /></div>
      <div className="absolute top-[689px] left-[931px]"><FolderIcon className="h-[22px] w-5" tone="#2fde70" base="#55a8df" /></div>
      <Watermark />
    </div>
  );
}
